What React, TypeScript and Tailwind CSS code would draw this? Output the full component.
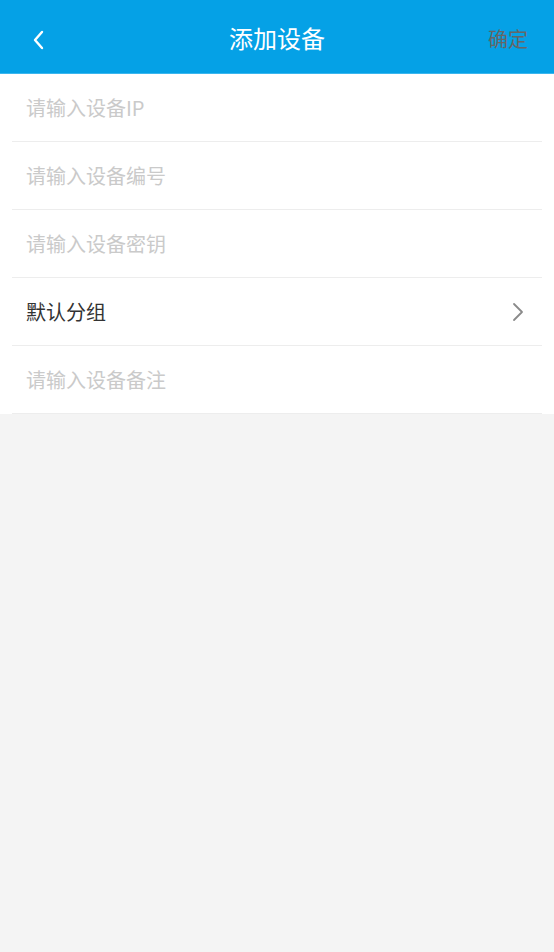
import * as React from 'react';

const font = { fontFamily: '"Noto Sans CJK SC", "Noto Sans", sans-serif' };

function Field({ placeholder }: { placeholder: string }) {
  return (
    <div className="mx-3 flex h-[68px] items-center border-b border-[#ededed] px-[14px]">
      <input
        placeholder={placeholder}
        className="w-full bg-transparent text-[20px] text-[#333] outline-none placeholder:text-[#cacaca]"
        style={font}
      />
    </div>
  );
}

export default function App() {
  return (
    <div className="flex min-h-[952px] flex-col bg-[#f4f4f4]" style={font}>
      <header className="relative flex h-[74px] items-center justify-center border-b border-[#3bb6ee] bg-[#05a1e6] pt-[3px]">
        <button type="button" className="absolute left-[26px] top-[26px] flex h-[28px] w-[24px] items-center justify-center">
          <svg width="14" height="22" viewBox="0 0 14 22" fill="none">
            <path d="M11 3 L4 11 L11 19" stroke="white" strokeWidth="2.4" strokeLinecap="round" strokeLinejoin="round" />
          </svg>
        </button>
        <h1 className="text-[24px] text-white">添加设备</h1>
        <button type="button" className="absolute right-[26px] top-[25px] text-[20px] leading-[28px] text-[#666666]">
          确定
        </button>
      </header>

      <div className="bg-white">
        <Field placeholder="请输入设备IP" />
        <Field placeholder="请输入设备编号" />
        <Field placeholder="请输入设备密钥" />
        <div className="mx-3 flex h-[68px] items-center justify-between border-b border-[#ededed] pl-[14px] pr-[18px]">
          <span className="text-[20px] text-[#333]">默认分组</span>
          <svg width="12" height="20" viewBox="0 0 12 20" fill="none">
            <path d="M2 2 L10 10 L2 18" stroke="#8a8a8a" strokeWidth="1.8" strokeLinecap="round" strokeLinejoin="round" />
          </svg>
        </div>
        <Field placeholder="请输入设备备注" />
      </div>
    </div>
  );
}
